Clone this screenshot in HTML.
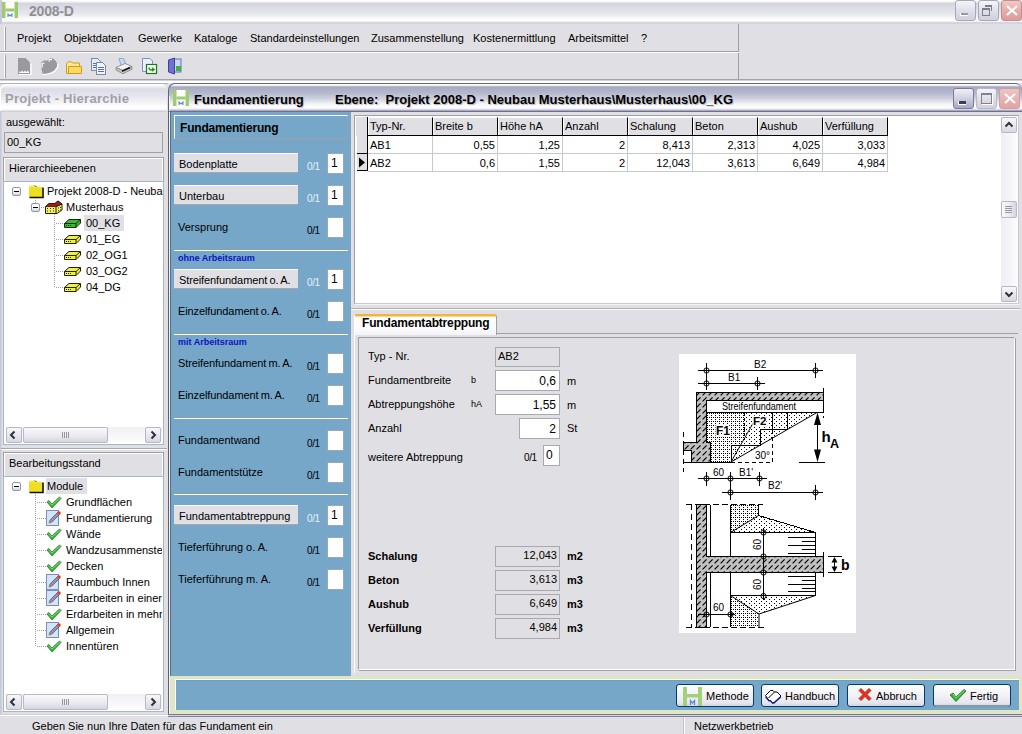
<!DOCTYPE html>
<html><head><meta charset="utf-8">
<style>
*{margin:0;padding:0;box-sizing:border-box}
html,body{width:1022px;height:734px;overflow:hidden;background:#e0dfe3;font-family:"Liberation Sans",sans-serif;font-size:11px;color:#000}
.a{position:absolute}
.t{position:absolute;white-space:nowrap;line-height:13px}
.b{font-weight:bold}
</style></head><body>
<!-- title bar -->
<div class="a" style="left:0;top:0;width:1022px;height:24px;background:linear-gradient(#ffffff 0,#ffffff 1px,#d4d4e0 3.5px,#dcdde6 8px,#e6e8ee 14px,#f8f8f8 18px,#ffffff 21px,#c8c8d8 23px,#e0dfe3 24px)"></div>
<div class="a" style="left:0;top:0;width:2px;height:24px;background:#c8c8d8"></div>
<svg class="a" style="left:2px;top:2px" width="16" height="16" viewBox="0 0 16 16"><rect x="0" y="0" width="16" height="16" fill="#fff"/><rect x="0" y="0" width="3.5" height="16" fill="#9ccb6c"/><rect x="12.5" y="0" width="3.5" height="16" fill="#9ccb6c"/><rect x="3.5" y="6.5" width="9" height="3" fill="#9ccb6c"/><path d="M6 15V12L8 14L10 12V15" stroke="#5a8ac8" stroke-width="1.1" fill="none"/></svg>
<div class="t b" style="left:29px;top:3px;font-size:14px;line-height:16px;color:#909094;letter-spacing:-0.2px">2008-D</div>
<div class="a" style="left:955px;top:0;width:21px;height:21px;border:1px solid #a8a8b8;border-radius:3px;background:linear-gradient(#f4f4f8,#e0e0ea 50%,#d0d0de)"></div>
<div class="a" style="left:960px;top:13px;width:8px;height:3px;background:#9898ac;border-bottom:1px solid #fff;border-left:1px solid #fff"></div>
<div class="a" style="left:978px;top:0;width:21px;height:21px;border:1px solid #a8a8b8;border-radius:3px;background:linear-gradient(#f4f4f8,#e0e0ea 50%,#d0d0de)"></div>
<div class="a" style="left:985px;top:5px;width:7px;height:6px;border:1px solid #7c7c8c;border-top-width:2px;border-left:none;border-bottom:none"></div>
<div class="a" style="left:982px;top:8px;width:8px;height:8px;border:1px solid #7c7c8c;border-top-width:2px;background:transparent"></div>
<div class="a" style="left:1001px;top:0;width:21px;height:21px;border:1px solid #c09090;border-radius:3px;background:linear-gradient(#f0c8c8,#e4a8a8 60%,#dc9c9c)"></div>
<svg class="a" style="left:1005px;top:4px" width="14" height="13"><path d="M2 2L12 11M12 2L2 11" stroke="#fff" stroke-width="2.2"/></svg>
<!-- menu bar -->
<div class="a" style="left:0;top:24px;width:739px;height:28px;background:#e0dfe3;border-right:1px solid #a0a0a4;border-bottom:1px solid #a0a0a4"></div>
<div class="a" style="left:0;top:52px;width:739px;height:1px;background:#fff"></div>
<div class="a" style="left:0;top:53px;width:739px;height:26px;background:#e0dfe3;border-right:1px solid #a0a0a4"></div>
<div class="a" style="left:0;top:79px;width:1022px;height:1px;background:#a4a4a8"></div><div class="a" style="left:0;top:80px;width:1022px;height:1px;background:#d0d0d4"></div><div class="a" style="left:0;top:81px;width:1022px;height:2px;background:#fff"></div>
<div class="a" style="left:4px;top:27px;width:2px;height:23px;border-left:1px solid #fff;border-right:1px solid #a0a0a4"></div>
<div class="a" style="left:4px;top:55px;width:2px;height:23px;border-left:1px solid #fff;border-right:1px solid #a0a0a4"></div>
<div class="t" style="left:17px;top:32px">Projekt</div>
<div class="t" style="left:64px;top:32px">Objektdaten</div>
<div class="t" style="left:138px;top:32px">Gewerke</div>
<div class="t" style="left:194px;top:32px">Kataloge</div>
<div class="t" style="left:250px;top:32px">Standardeinstellungen</div>
<div class="t" style="left:371px;top:32px">Zusammenstellung</div>
<div class="t" style="left:473px;top:32px">Kostenermittlung</div>
<div class="t" style="left:568px;top:32px">Arbeitsmittel</div>
<div class="t" style="left:641px;top:32px">?</div>
<!-- toolbar icons -->
<svg class="a" style="left:17px;top:57px" width="16" height="19"><path d="M14 6.5V17.5H2" stroke="#fff" stroke-width="1.2" fill="none"/><path d="M1 1H8.5L13 5.5V17H1Z" fill="#9a9a9e"/><path d="M2 16L2.8 14L3.8 15.2L5.2 13.6L6.5 15.2L8 13.6L9.3 15.2L10.8 13.6L12 15.2V16Z" fill="#fff"/></svg>
<svg class="a" style="left:40px;top:57px" width="19" height="19"><path d="M17.8 7V10L14.8 14.2L10.5 16.5L5 17.5H2.5" stroke="#fff" stroke-width="1.2" fill="none"/><path d="M1 5.5L4 3.5H7.5L9.5 1.5H13L15 3L17 6V9.5L14 13.5L10 15.8L5 16.8H2.5L1.5 12V8Z" fill="#9a9a9e"/><path d="M2.2 10.5V6.2H4.5M9.2 4.8V2.6H12" stroke="#fff" stroke-width="1.1" fill="none"/></svg>
<svg class="a" style="left:65px;top:60px" width="18" height="15"><path d="M1.5 13.5V3.5L3 1.8H6.5L7.5 3H14.5V13.5Z" fill="#fce890" stroke="#c8a020"/><path d="M3.5 13.5V6.5H16.5V13.5Z" fill="#ffd860" stroke="#c8a020"/></svg>
<svg class="a" style="left:90px;top:57px" width="18" height="18" shape-rendering="crispEdges"><path d="M1.5 1.5H7.5L10.5 4.5V13.5H1.5Z" fill="#e4ecfa" stroke="#8088a8"/><path d="M6.5 5.5H12.5L15.5 8.5V17.5H6.5Z" fill="#eef4fc" stroke="#8088a8"/><path d="M8 10.5H14M8 12.5H14M8 14.5H14M3 6.5H6M3 8.5H6M3 10.5H6" stroke="#6070a0"/></svg>
<svg class="a" style="left:115px;top:57px" width="18" height="18"><path d="M4 1.5H8.5L11 7.5L6.5 9.5Z" fill="#c4dcf4" stroke="#8aa0c0" stroke-width="0.9"/><path d="M1 10.5L10 6.5L17 9.5L8 13.5Z" fill="#f4f4f4" stroke="#8c8c8c" stroke-width="0.9"/><path d="M1 10.5V13L8 16.8L17 12.2V9.5L8 13.5Z" fill="#c4c4c4" stroke="#8c8c8c" stroke-width="0.9"/><path d="M7 14.2L15 10.6" stroke="#111" stroke-width="1.6"/></svg>
<svg class="a" style="left:141px;top:57px" width="18" height="18"><path d="M1.5 1.5H9L11.5 4V14.5H1.5Z" fill="#e8f0fc" stroke="#8090c0"/><rect x="5.5" y="7.5" width="10" height="9" fill="#fff" stroke="#187818" stroke-width="1.2"/><path d="M8 10.5C8 13 10 13.5 12.5 12.5M11 11L13 12.5L11 14" stroke="#18a018" stroke-width="1.6" fill="none"/></svg>
<svg class="a" style="left:167px;top:57px" width="16" height="18"><rect x="7" y="2" width="7" height="13" fill="#c8d8f0" stroke="#6070c0"/><rect x="9" y="9" width="5" height="5" fill="#40b040"/><path d="M1.5 3L7.5 1V17L1.5 15Z" fill="#7070d0" stroke="#4040a0"/></svg>
<!-- left panel -->
<div class="a" style="left:0;top:83px;width:168px;height:633px;background:#e0dfe3"></div>
<div class="a" style="left:0;top:90px;width:2px;height:626px;background:linear-gradient(90deg,#c0c4d4,#d8d8e0)"></div>
<div class="a" style="left:0;top:83px;width:168px;height:1px;background:#b0b0b8"></div><div class="a" style="left:0;top:84px;width:167px;height:27px;background:linear-gradient(#ffffff 0,#f4f4f8 2px,#dcdce8 5px,#e4e4ee 11px,#f2f2f6 18px,#ffffff 23px,#fafafc 26px,#c8c8d4 27px);border-radius:6px 6px 0 0;box-shadow:inset 1px 1px 0 #fff"></div>
<div class="t b" style="left:5px;top:91px;font-size:13px;line-height:15px;color:#a0a0a4;letter-spacing:0.25px">Projekt - Hierarchie</div>
<div class="a" style="left:1px;top:111px;width:166px;height:1px;background:#d0d0d8"></div>
<div class="t" style="left:6px;top:116px">ausgewählt:</div>
<div class="a" style="left:4px;top:132px;width:159px;height:21px;border:1px solid #a0a0a4"></div>
<div class="t" style="left:7px;top:136px">00_KG</div>
<div class="a" style="left:3px;top:157px;width:161px;height:24px;border:1px solid #a0a0a4;border-bottom:none;box-shadow:inset 1px 1px 0 #fff,inset -1px 0 0 #fff"></div>
<div class="t" style="left:9px;top:162px">Hierarchieebenen</div>
<div class="a" style="left:3px;top:181px;width:161px;height:264px;background:#fff;border:1px solid #a4b8cc"></div>
<div class="a" style="left:12px;top:187px;width:9px;height:9px;border:1px solid #9098a8;border-radius:2px;background:linear-gradient(#fff 40%,#d4d4e0)"></div><div class="a" style="left:14px;top:191px;width:5px;height:1px;background:#000"></div><svg class="a" style="left:28px;top:184px" width="16" height="15"><path d="M1 3.5Q1 1.5 3 1.5H7L8.5 3H14V13H1Z" fill="#f0e838"/><path d="M7 1.5L8.5 3" stroke="#303010"/><path d="M1 4H14V13H1Z" fill="#eee020"/><path d="M1.5 13.5H15V3.5" stroke="#101008" stroke-width="1.6" fill="none"/></svg><div class="t" style="left:47px;top:185px;width:116px;overflow:hidden">Projekt 2008-D - Neubau</div><div class="a" style="left:35px;top:198px;width:1px;height:5px;background:repeating-linear-gradient(#a0a0a0 0 1px,transparent 1px 2px)"></div><div class="a" style="left:31px;top:203px;width:9px;height:9px;border:1px solid #9098a8;border-radius:2px;background:linear-gradient(#fff 40%,#d4d4e0)"></div><div class="a" style="left:33px;top:207px;width:5px;height:1px;background:#000"></div><div class="a" style="left:41px;top:207px;width:4px;height:1px;background:repeating-linear-gradient(90deg,#a0a0a0 0 1px,transparent 1px 2px)"></div><svg class="a" style="left:45px;top:200px" width="18" height="14"><path d="M0.5 6.5L4 3.5H10L13 1L17 4V10L12 13.5H0.5Z" fill="#f0f060" stroke="#202010"/><path d="M4 3.5L10 3.5L13 1L17 4L11 6.5H1Z" fill="#b01818" stroke="#202010" stroke-width="0.8"/><path d="M11 6.5V13.5M11 6.5L17 4" stroke="#202010" fill="none"/><path d="M2 8.5H3M5 8.5H6M8 8.5H9M2 11H3M5 11H6M8 11H9M13 8H14M15 7.5H16M13 10.5H14M15 10H16" stroke="#303010"/></svg><div class="t" style="left:66px;top:201px">Musterhaus</div><div class="a" style="left:54px;top:214px;width:1px;height:74px;background:repeating-linear-gradient(#a0a0a0 0 1px,transparent 1px 2px)"></div><div class="a" style="left:56px;top:223px;width:8px;height:1px;background:repeating-linear-gradient(90deg,#a0a0a0 0 1px,transparent 1px 2px)"></div><svg class="a" style="left:64px;top:218px" width="17" height="10"><path d="M0.5 5.5L5 1.5H16.5V5L12 9.5H0.5Z" fill="#30c030" stroke="#202010" stroke-width="1"/><path d="M0.5 5.5H12L16.5 1.5M12 5.5V9.5" stroke="#202010" fill="none"/><path d="M2 7.5H3M4 7.5H5M6 7.5H7" stroke="#202010"/></svg><div class="a" style="left:84px;top:215px;width:40px;height:16px;background:#e0dfe3"></div><div class="t" style="left:86px;top:217px">00_KG</div><div class="a" style="left:56px;top:239px;width:8px;height:1px;background:repeating-linear-gradient(90deg,#a0a0a0 0 1px,transparent 1px 2px)"></div><svg class="a" style="left:64px;top:234px" width="17" height="10"><path d="M0.5 5.5L5 1.5H16.5V5L12 9.5H0.5Z" fill="#f0f040" stroke="#202010" stroke-width="1"/><path d="M0.5 5.5H12L16.5 1.5M12 5.5V9.5" stroke="#202010" fill="none"/><path d="M2 7.5H3M4 7.5H5M6 7.5H7" stroke="#202010"/></svg><div class="t" style="left:86px;top:233px">01_EG</div><div class="a" style="left:56px;top:255px;width:8px;height:1px;background:repeating-linear-gradient(90deg,#a0a0a0 0 1px,transparent 1px 2px)"></div><svg class="a" style="left:64px;top:250px" width="17" height="10"><path d="M0.5 5.5L5 1.5H16.5V5L12 9.5H0.5Z" fill="#f0f040" stroke="#202010" stroke-width="1"/><path d="M0.5 5.5H12L16.5 1.5M12 5.5V9.5" stroke="#202010" fill="none"/><path d="M2 7.5H3M4 7.5H5M6 7.5H7" stroke="#202010"/></svg><div class="t" style="left:86px;top:249px">02_OG1</div><div class="a" style="left:56px;top:271px;width:8px;height:1px;background:repeating-linear-gradient(90deg,#a0a0a0 0 1px,transparent 1px 2px)"></div><svg class="a" style="left:64px;top:266px" width="17" height="10"><path d="M0.5 5.5L5 1.5H16.5V5L12 9.5H0.5Z" fill="#f0f040" stroke="#202010" stroke-width="1"/><path d="M0.5 5.5H12L16.5 1.5M12 5.5V9.5" stroke="#202010" fill="none"/><path d="M2 7.5H3M4 7.5H5M6 7.5H7" stroke="#202010"/></svg><div class="t" style="left:86px;top:265px">03_OG2</div><div class="a" style="left:56px;top:287px;width:8px;height:1px;background:repeating-linear-gradient(90deg,#a0a0a0 0 1px,transparent 1px 2px)"></div><svg class="a" style="left:64px;top:282px" width="17" height="10"><path d="M0.5 5.5L5 1.5H16.5V5L12 9.5H0.5Z" fill="#f0f040" stroke="#202010" stroke-width="1"/><path d="M0.5 5.5H12L16.5 1.5M12 5.5V9.5" stroke="#202010" fill="none"/><path d="M2 7.5H3M4 7.5H5M6 7.5H7" stroke="#202010"/></svg><div class="t" style="left:86px;top:281px">04_DG</div><div class="a" style="left:6px;top:427px;width:156px;height:16px;background:linear-gradient(#f0f0f4,#fdfdfd)"></div>
<div class="a" style="left:6px;top:427px;width:16px;height:16px;border:1px solid #b4b8c8;border-radius:2px;background:linear-gradient(#f8f8fa,#d8d8e2)"></div>
<svg class="a" style="left:6px;top:427px" width="16" height="16"><path d="M8.5 4.5L5 8L8.5 11.5" stroke="#303038" stroke-width="2" fill="none"/></svg>
<div class="a" style="left:23px;top:427px;width:85px;height:16px;border:1px solid #b4b8c8;border-radius:2px;background:linear-gradient(#fafafc,#e8e8ee 60%,#d4d4de)"></div>
<div class="a" style="left:62px;top:432px;width:8px;height:6px;background:repeating-linear-gradient(90deg,#9898a4 0 1px,transparent 1px 2px)"></div>
<div class="a" style="left:145px;top:427px;width:16px;height:16px;border:1px solid #b4b8c8;border-radius:2px;background:linear-gradient(#f8f8fa,#d8d8e2)"></div>
<svg class="a" style="left:145px;top:427px" width="16" height="16"><path d="M6.5 4.5L10 8L6.5 11.5" stroke="#303038" stroke-width="2" fill="none"/></svg>
<div class="a" style="left:1px;top:448px;width:166px;height:1px;background:#a8a8b0"></div>
<div class="a" style="left:1px;top:449px;width:166px;height:1px;background:#fff"></div>
<div class="a" style="left:3px;top:452px;width:161px;height:24px;border:1px solid #a0a0a4;border-bottom:none;box-shadow:inset 1px 1px 0 #fff,inset -1px 0 0 #fff"></div>
<div class="t" style="left:9px;top:457px">Bearbeitungsstand</div>
<div class="a" style="left:3px;top:476px;width:161px;height:236px;background:#fff;border:1px solid #a4b8cc"></div>
<div class="a" style="left:12px;top:482px;width:9px;height:9px;border:1px solid #9098a8;border-radius:2px;background:linear-gradient(#fff 40%,#d4d4e0)"></div><div class="a" style="left:14px;top:486px;width:5px;height:1px;background:#000"></div><svg class="a" style="left:28px;top:479px" width="16" height="15"><path d="M1 3.5Q1 1.5 3 1.5H7L8.5 3H14V13H1Z" fill="#f0e838"/><path d="M7 1.5L8.5 3" stroke="#303010"/><path d="M1 4H14V13H1Z" fill="#eee020"/><path d="M1.5 13.5H15V3.5" stroke="#101008" stroke-width="1.6" fill="none"/></svg><div class="a" style="left:46px;top:478px;width:41px;height:16px;background:#e0dfe3"></div><div class="t" style="left:47px;top:480px">Module</div><div class="a" style="left:35px;top:493px;width:1px;height:154px;background:repeating-linear-gradient(#a0a0a0 0 1px,transparent 1px 2px)"></div><div class="a" style="left:37px;top:502px;width:9px;height:1px;background:repeating-linear-gradient(90deg,#a0a0a0 0 1px,transparent 1px 2px)"></div><svg class="a" style="left:46px;top:496px" width="16" height="13"><path d="M1 6L3 4.5L6 8L13.5 1L15 2.5L6 12Z" fill="#3cb43c" stroke="#1e7a1e" stroke-width="0.8"/><path d="M3 5.5L6 9L14 2" stroke="#90e090" stroke-width="0.8" fill="none"/></svg><div class="t" style="left:66px;top:496px;width:96px;overflow:hidden">Grundflächen</div><div class="a" style="left:37px;top:518px;width:9px;height:1px;background:repeating-linear-gradient(90deg,#a0a0a0 0 1px,transparent 1px 2px)"></div><svg class="a" style="left:46px;top:510px" width="16" height="16"><rect x="0.5" y="0.5" width="12" height="15" fill="#d4e4f8" stroke="#7890c0"/><path d="M3 13L4 10L12 2L14 4L6 12Z" fill="#9090b0" stroke="#505070" stroke-width="0.7"/><circle cx="13" cy="3" r="1.8" fill="#e04030"/><path d="M3 13L4 10L6 12Z" fill="#c09040"/></svg><div class="t" style="left:66px;top:512px;width:96px;overflow:hidden">Fundamentierung</div><div class="a" style="left:37px;top:534px;width:9px;height:1px;background:repeating-linear-gradient(90deg,#a0a0a0 0 1px,transparent 1px 2px)"></div><svg class="a" style="left:46px;top:528px" width="16" height="13"><path d="M1 6L3 4.5L6 8L13.5 1L15 2.5L6 12Z" fill="#3cb43c" stroke="#1e7a1e" stroke-width="0.8"/><path d="M3 5.5L6 9L14 2" stroke="#90e090" stroke-width="0.8" fill="none"/></svg><div class="t" style="left:66px;top:528px;width:96px;overflow:hidden">Wände</div><div class="a" style="left:37px;top:550px;width:9px;height:1px;background:repeating-linear-gradient(90deg,#a0a0a0 0 1px,transparent 1px 2px)"></div><svg class="a" style="left:46px;top:544px" width="16" height="13"><path d="M1 6L3 4.5L6 8L13.5 1L15 2.5L6 12Z" fill="#3cb43c" stroke="#1e7a1e" stroke-width="0.8"/><path d="M3 5.5L6 9L14 2" stroke="#90e090" stroke-width="0.8" fill="none"/></svg><div class="t" style="left:66px;top:544px;width:96px;overflow:hidden">Wandzusammenste</div><div class="a" style="left:37px;top:566px;width:9px;height:1px;background:repeating-linear-gradient(90deg,#a0a0a0 0 1px,transparent 1px 2px)"></div><svg class="a" style="left:46px;top:560px" width="16" height="13"><path d="M1 6L3 4.5L6 8L13.5 1L15 2.5L6 12Z" fill="#3cb43c" stroke="#1e7a1e" stroke-width="0.8"/><path d="M3 5.5L6 9L14 2" stroke="#90e090" stroke-width="0.8" fill="none"/></svg><div class="t" style="left:66px;top:560px;width:96px;overflow:hidden">Decken</div><div class="a" style="left:37px;top:582px;width:9px;height:1px;background:repeating-linear-gradient(90deg,#a0a0a0 0 1px,transparent 1px 2px)"></div><svg class="a" style="left:46px;top:574px" width="16" height="16"><rect x="0.5" y="0.5" width="12" height="15" fill="#d4e4f8" stroke="#7890c0"/><path d="M3 13L4 10L12 2L14 4L6 12Z" fill="#9090b0" stroke="#505070" stroke-width="0.7"/><circle cx="13" cy="3" r="1.8" fill="#e04030"/><path d="M3 13L4 10L6 12Z" fill="#c09040"/></svg><div class="t" style="left:66px;top:576px;width:96px;overflow:hidden">Raumbuch Innen</div><div class="a" style="left:37px;top:598px;width:9px;height:1px;background:repeating-linear-gradient(90deg,#a0a0a0 0 1px,transparent 1px 2px)"></div><svg class="a" style="left:46px;top:590px" width="16" height="16"><rect x="0.5" y="0.5" width="12" height="15" fill="#d4e4f8" stroke="#7890c0"/><path d="M3 13L4 10L12 2L14 4L6 12Z" fill="#9090b0" stroke="#505070" stroke-width="0.7"/><circle cx="13" cy="3" r="1.8" fill="#e04030"/><path d="M3 13L4 10L6 12Z" fill="#c09040"/></svg><div class="t" style="left:66px;top:592px;width:96px;overflow:hidden">Erdarbeiten in einer</div><div class="a" style="left:37px;top:614px;width:9px;height:1px;background:repeating-linear-gradient(90deg,#a0a0a0 0 1px,transparent 1px 2px)"></div><svg class="a" style="left:46px;top:608px" width="16" height="13"><path d="M1 6L3 4.5L6 8L13.5 1L15 2.5L6 12Z" fill="#3cb43c" stroke="#1e7a1e" stroke-width="0.8"/><path d="M3 5.5L6 9L14 2" stroke="#90e090" stroke-width="0.8" fill="none"/></svg><div class="t" style="left:66px;top:608px;width:96px;overflow:hidden">Erdarbeiten in mehre</div><div class="a" style="left:37px;top:630px;width:9px;height:1px;background:repeating-linear-gradient(90deg,#a0a0a0 0 1px,transparent 1px 2px)"></div><svg class="a" style="left:46px;top:622px" width="16" height="16"><rect x="0.5" y="0.5" width="12" height="15" fill="#d4e4f8" stroke="#7890c0"/><path d="M3 13L4 10L12 2L14 4L6 12Z" fill="#9090b0" stroke="#505070" stroke-width="0.7"/><circle cx="13" cy="3" r="1.8" fill="#e04030"/><path d="M3 13L4 10L6 12Z" fill="#c09040"/></svg><div class="t" style="left:66px;top:624px;width:96px;overflow:hidden">Allgemein</div><div class="a" style="left:37px;top:646px;width:9px;height:1px;background:repeating-linear-gradient(90deg,#a0a0a0 0 1px,transparent 1px 2px)"></div><svg class="a" style="left:46px;top:640px" width="16" height="13"><path d="M1 6L3 4.5L6 8L13.5 1L15 2.5L6 12Z" fill="#3cb43c" stroke="#1e7a1e" stroke-width="0.8"/><path d="M3 5.5L6 9L14 2" stroke="#90e090" stroke-width="0.8" fill="none"/></svg><div class="t" style="left:66px;top:640px;width:96px;overflow:hidden">Innentüren</div><div class="a" style="left:6px;top:694px;width:156px;height:16px;background:linear-gradient(#f0f0f4,#fdfdfd)"></div>
<div class="a" style="left:6px;top:694px;width:16px;height:16px;border:1px solid #b4b8c8;border-radius:2px;background:linear-gradient(#f8f8fa,#d8d8e2)"></div>
<svg class="a" style="left:6px;top:694px" width="16" height="16"><path d="M8.5 4.5L5 8L8.5 11.5" stroke="#303038" stroke-width="2" fill="none"/></svg>
<div class="a" style="left:23px;top:694px;width:85px;height:16px;border:1px solid #b4b8c8;border-radius:2px;background:linear-gradient(#fafafc,#e8e8ee 60%,#d4d4de)"></div>
<div class="a" style="left:62px;top:699px;width:8px;height:6px;background:repeating-linear-gradient(90deg,#9898a4 0 1px,transparent 1px 2px)"></div>
<div class="a" style="left:145px;top:694px;width:16px;height:16px;border:1px solid #b4b8c8;border-radius:2px;background:linear-gradient(#f8f8fa,#d8d8e2)"></div>
<svg class="a" style="left:145px;top:694px" width="16" height="16"><path d="M6.5 4.5L10 8L6.5 11.5" stroke="#303038" stroke-width="2" fill="none"/></svg>

<!-- main window -->
<div class="a" style="left:168px;top:83px;width:854px;height:633px;background:#e0dfe3"></div>
<div class="a" style="left:168px;top:83px;width:854px;height:28px;border-radius:7px 7px 0 0;border-top:1px solid #606878;border-left:1px solid #606878;background:linear-gradient(#ffffff 0,#ffffff 1px,#a8a8c4 3px,#b4b8cc 9px,#d0d4e0 15px,#f4f4f6 20px,#ffffff 23px,#f0f0f6 25px,#9090b0 27px)"></div>
<div class="a" style="left:168px;top:96px;width:1px;height:620px;background:#606070"></div>
<div class="a" style="left:169px;top:96px;width:1px;height:620px;background:#f4f4f8"></div>
<div class="a" style="left:170px;top:112px;width:1px;height:564px;background:#5a6e8a"></div>
<div class="a" style="left:168px;top:111px;width:854px;height:1px;background:#707090"></div>
<svg class="a" style="left:173px;top:90px" width="16" height="16" viewBox="0 0 16 16"><rect x="0" y="0" width="16" height="16" fill="#fff"/><rect x="0" y="0" width="3.5" height="16" fill="#a0cc70"/><rect x="12.5" y="0" width="3.5" height="16" fill="#a0cc70"/><rect x="3.5" y="6.5" width="9" height="3" fill="#a0cc70"/><path d="M6 15V12L8 14L10 12V15" stroke="#6088c0" stroke-width="1.1" fill="none"/></svg>
<div class="t b" style="left:194px;top:92px;font-size:13px;line-height:15px;text-shadow:1px 1px 1px #b0b0c0">Fundamentierung</div>
<div class="t b" style="left:335px;top:92px;font-size:13px;line-height:15px;text-shadow:1px 1px 1px #b0b0c0">Ebene:&nbsp; Projekt 2008-D - Neubau Musterhaus\Musterhaus\00_KG</div>
<div class="a" style="left:953px;top:88px;width:21px;height:21px;border:1px solid #7c7c98;border-radius:3px;background:linear-gradient(#f0f0f8,#d0d0e4 50%,#a8a8c8)"></div>
<div class="a" style="left:958px;top:101px;width:8px;height:4px;background:#3c3c58;border-bottom:1px solid #fff;border-left:1px solid #fff"></div>
<div class="a" style="left:976px;top:88px;width:21px;height:21px;border:1px solid #b8b8c8;border-radius:3px;background:linear-gradient(#f4f4f8,#e0e0ea 50%,#d0d0de)"></div>
<div class="a" style="left:981px;top:93px;width:11px;height:11px;border:1px solid #808090;border-top-width:2px;box-shadow:1px 1px 0 #fff"></div>
<div class="a" style="left:999px;top:88px;width:21px;height:21px;border:1px solid #d0a0a0;border-radius:3px;background:linear-gradient(#f0c4c4,#e8b0b0 60%,#e0a4a4)"></div>
<svg class="a" style="left:1003px;top:92px" width="14" height="13"><path d="M2 2L12 11M12 2L2 11" stroke="#fff" stroke-width="2.2"/></svg>

<!-- blue left panel -->
<div class="a" style="left:171px;top:112px;width:180px;height:564px;background:#76a7c8"></div>
<div class="a" style="left:174px;top:115px;width:174px;height:24px;border-top:1px solid #fff;border-left:1px solid #fff;border-right:1px solid #a0a0a8;border-bottom:1px solid #a0a0a8"></div>
<div class="t b" style="left:180px;top:121px;font-size:12px;line-height:14px;letter-spacing:-0.2px">Fundamentierung</div>
<div class="a" style="left:174px;top:153px;width:124px;height:20px;background:#e0dfe3;border-top:1px solid #fff;border-bottom:1px solid #a8a8b0"></div><div class="t" style="left:179px;top:158px">Bodenplatte</div><div class="t" style="left:307px;top:162px;font-size:10px;line-height:10px;letter-spacing:-0.4px;color:#e4f0fc">0/1</div><div class="a" style="left:327px;top:153px;width:17px;height:21px;background:#fff;border:1px solid #98a8b8"></div><div class="t" style="left:331px;top:156px;font-size:12px;line-height:14px">1</div>
<div class="a" style="left:174px;top:185px;width:124px;height:20px;background:#e0dfe3;border-top:1px solid #fff;border-bottom:1px solid #a8a8b0"></div><div class="t" style="left:179px;top:190px">Unterbau</div><div class="t" style="left:307px;top:194px;font-size:10px;line-height:10px;letter-spacing:-0.4px;color:#e4f0fc">0/1</div><div class="a" style="left:327px;top:185px;width:17px;height:21px;background:#fff;border:1px solid #98a8b8"></div><div class="t" style="left:331px;top:188px;font-size:12px;line-height:14px">1</div>
<div class="t" style="left:178px;top:221px">Versprung</div><div class="t" style="left:307px;top:226px;font-size:10px;line-height:10px;letter-spacing:-0.4px;color:#000">0/1</div><div class="a" style="left:327px;top:217px;width:17px;height:21px;background:#fff;border:1px solid #98a8b8"></div>
<div class="a" style="left:174px;top:249px;width:174px;height:1px;background:#8c9cac"></div><div class="a" style="left:174px;top:250px;width:174px;height:1px;background:#fff"></div>
<div class="t" style="left:178px;top:253px;font-size:9px;line-height:10px;font-weight:bold;color:#0814c4">ohne Arbeitsraum</div>
<div class="a" style="left:174px;top:269px;width:124px;height:20px;background:#e0dfe3;border-top:1px solid #fff;border-bottom:1px solid #a8a8b0"></div><div class="t" style="left:179px;top:274px;word-spacing:-0.6px;letter-spacing:-0.1px">Streifenfundament o. A.</div><div class="t" style="left:307px;top:278px;font-size:10px;line-height:10px;letter-spacing:-0.4px;color:#e4f0fc">0/1</div><div class="a" style="left:327px;top:269px;width:17px;height:21px;background:#fff;border:1px solid #98a8b8"></div><div class="t" style="left:331px;top:272px;font-size:12px;line-height:14px">1</div>
<div class="t" style="left:178px;top:305px;word-spacing:-0.6px;letter-spacing:-0.1px">Einzelfundament o. A.</div><div class="t" style="left:307px;top:310px;font-size:10px;line-height:10px;letter-spacing:-0.4px;color:#000">0/1</div><div class="a" style="left:327px;top:301px;width:17px;height:21px;background:#fff;border:1px solid #98a8b8"></div>
<div class="a" style="left:174px;top:333px;width:174px;height:1px;background:#8c9cac"></div><div class="a" style="left:174px;top:334px;width:174px;height:1px;background:#fff"></div>
<div class="t" style="left:178px;top:337px;font-size:9px;line-height:10px;font-weight:bold;color:#0814c4">mit Arbeitsraum</div>
<div class="t" style="left:178px;top:357px;word-spacing:-0.6px;letter-spacing:-0.1px">Streifenfundament m. A.</div><div class="t" style="left:307px;top:362px;font-size:10px;line-height:10px;letter-spacing:-0.4px;color:#000">0/1</div><div class="a" style="left:327px;top:353px;width:17px;height:21px;background:#fff;border:1px solid #98a8b8"></div>
<div class="t" style="left:178px;top:389px;word-spacing:-0.6px;letter-spacing:-0.1px">Einzelfundament m. A.</div><div class="t" style="left:307px;top:394px;font-size:10px;line-height:10px;letter-spacing:-0.4px;color:#000">0/1</div><div class="a" style="left:327px;top:385px;width:17px;height:21px;background:#fff;border:1px solid #98a8b8"></div>
<div class="a" style="left:174px;top:417px;width:174px;height:1px;background:#8c9cac"></div><div class="a" style="left:174px;top:418px;width:174px;height:1px;background:#fff"></div>
<div class="t" style="left:178px;top:434px">Fundamentwand</div><div class="t" style="left:307px;top:439px;font-size:10px;line-height:10px;letter-spacing:-0.4px;color:#000">0/1</div><div class="a" style="left:327px;top:430px;width:17px;height:21px;background:#fff;border:1px solid #98a8b8"></div>
<div class="t" style="left:178px;top:466px">Fundamentstütze</div><div class="t" style="left:307px;top:471px;font-size:10px;line-height:10px;letter-spacing:-0.4px;color:#000">0/1</div><div class="a" style="left:327px;top:462px;width:17px;height:21px;background:#fff;border:1px solid #98a8b8"></div>
<div class="a" style="left:174px;top:493px;width:174px;height:1px;background:#8c9cac"></div><div class="a" style="left:174px;top:494px;width:174px;height:1px;background:#fff"></div>
<div class="a" style="left:174px;top:505px;width:124px;height:20px;background:#e0dfe3;border-top:1px solid #fff;border-bottom:1px solid #a8a8b0"></div><div class="t" style="left:179px;top:510px">Fundamentabtreppung</div><div class="t" style="left:307px;top:514px;font-size:10px;line-height:10px;letter-spacing:-0.4px;color:#e4f0fc">0/1</div><div class="a" style="left:327px;top:505px;width:17px;height:21px;background:#fff;border:1px solid #98a8b8"></div><div class="t" style="left:331px;top:508px;font-size:12px;line-height:14px">1</div>
<div class="t" style="left:178px;top:541px">Tieferführung o. A.</div><div class="t" style="left:307px;top:546px;font-size:10px;line-height:10px;letter-spacing:-0.4px;color:#000">0/1</div><div class="a" style="left:327px;top:537px;width:17px;height:21px;background:#fff;border:1px solid #98a8b8"></div>
<div class="t" style="left:178px;top:573px">Tieferführung m. A.</div><div class="t" style="left:307px;top:578px;font-size:10px;line-height:10px;letter-spacing:-0.4px;color:#000">0/1</div><div class="a" style="left:327px;top:569px;width:17px;height:21px;background:#fff;border:1px solid #98a8b8"></div>

<!-- grid -->
<div class="a" style="left:351px;top:112px;width:669px;height:564px;background:#e0dfe3"></div>
<div class="a" style="left:354px;top:115px;width:665px;height:189px;background:#fff;border:1px solid #a0a0a8;border-right-color:#c8c8d0;border-bottom-color:#c8c8d0"></div>
<div class="a" style="left:355px;top:304px;width:665px;height:1px;background:#f4f4f4"></div>
<div class="a" style="left:351px;top:308px;width:669px;height:1px;background:#b0b0b4"></div>
<div class="a" style="left:351px;top:309px;width:669px;height:1px;background:#fafafa"></div>
<div class="a" style="left:356px;top:117px;width:532px;height:19px;background:#e0dfe3"></div>
<div class="a" style="left:356px;top:135px;width:532px;height:1px;background:#000"></div>
<div class="a" style="left:356px;top:117px;width:12px;height:54px;background:#e0dfe3"></div>
<div class="a" style="left:367px;top:117px;width:1px;height:54px;background:#000"></div>
<div class="a" style="left:356px;top:153px;width:12px;height:1px;background:#000"></div>
<div class="a" style="left:356px;top:170px;width:12px;height:1px;background:#000"></div>
<div class="a" style="left:356px;top:136px;width:1px;height:35px;background:#fff"></div>
<svg class="a" style="left:358px;top:157px" width="8" height="11"><path d="M1 0.5L7 5.5L1 10.5Z" fill="#000"/></svg>
<div class="a" style="left:368px;top:117px;width:65px;height:18px;border-left:1px solid #fff;border-top:1px solid #fff;border-right:1px solid #000"></div><div class="t" style="left:370px;top:120px">Typ-Nr.</div>
<div class="a" style="left:368px;top:136px;width:65px;height:18px;border-right:1px solid #c8c8c8;border-bottom:1px solid #c8c8c8"></div><div class="t" style="left:370px;top:139px">AB1</div><div class="a" style="left:368px;top:154px;width:65px;height:18px;border-right:1px solid #c8c8c8;border-bottom:1px solid #c8c8c8"></div><div class="t" style="left:370px;top:157px">AB2</div>
<div class="a" style="left:433px;top:117px;width:65px;height:18px;border-left:1px solid #fff;border-top:1px solid #fff;border-right:1px solid #000"></div><div class="t" style="left:435px;top:120px">Breite b</div>
<div class="a" style="left:433px;top:136px;width:65px;height:18px;border-right:1px solid #c8c8c8;border-bottom:1px solid #c8c8c8"></div><div class="t" style="left:433px;top:139px;width:62px;text-align:right">0,55</div><div class="a" style="left:433px;top:154px;width:65px;height:18px;border-right:1px solid #c8c8c8;border-bottom:1px solid #c8c8c8"></div><div class="t" style="left:433px;top:157px;width:62px;text-align:right">0,6</div>
<div class="a" style="left:498px;top:117px;width:65px;height:18px;border-left:1px solid #fff;border-top:1px solid #fff;border-right:1px solid #000"></div><div class="t" style="left:500px;top:120px">Höhe hA</div>
<div class="a" style="left:498px;top:136px;width:65px;height:18px;border-right:1px solid #c8c8c8;border-bottom:1px solid #c8c8c8"></div><div class="t" style="left:498px;top:139px;width:62px;text-align:right">1,25</div><div class="a" style="left:498px;top:154px;width:65px;height:18px;border-right:1px solid #c8c8c8;border-bottom:1px solid #c8c8c8"></div><div class="t" style="left:498px;top:157px;width:62px;text-align:right">1,55</div>
<div class="a" style="left:563px;top:117px;width:65px;height:18px;border-left:1px solid #fff;border-top:1px solid #fff;border-right:1px solid #000"></div><div class="t" style="left:565px;top:120px">Anzahl</div>
<div class="a" style="left:563px;top:136px;width:65px;height:18px;border-right:1px solid #c8c8c8;border-bottom:1px solid #c8c8c8"></div><div class="t" style="left:563px;top:139px;width:62px;text-align:right">2</div><div class="a" style="left:563px;top:154px;width:65px;height:18px;border-right:1px solid #c8c8c8;border-bottom:1px solid #c8c8c8"></div><div class="t" style="left:563px;top:157px;width:62px;text-align:right">2</div>
<div class="a" style="left:628px;top:117px;width:65px;height:18px;border-left:1px solid #fff;border-top:1px solid #fff;border-right:1px solid #000"></div><div class="t" style="left:630px;top:120px">Schalung</div>
<div class="a" style="left:628px;top:136px;width:65px;height:18px;border-right:1px solid #c8c8c8;border-bottom:1px solid #c8c8c8"></div><div class="t" style="left:628px;top:139px;width:62px;text-align:right">8,413</div><div class="a" style="left:628px;top:154px;width:65px;height:18px;border-right:1px solid #c8c8c8;border-bottom:1px solid #c8c8c8"></div><div class="t" style="left:628px;top:157px;width:62px;text-align:right">12,043</div>
<div class="a" style="left:693px;top:117px;width:65px;height:18px;border-left:1px solid #fff;border-top:1px solid #fff;border-right:1px solid #000"></div><div class="t" style="left:695px;top:120px">Beton</div>
<div class="a" style="left:693px;top:136px;width:65px;height:18px;border-right:1px solid #c8c8c8;border-bottom:1px solid #c8c8c8"></div><div class="t" style="left:693px;top:139px;width:62px;text-align:right">2,313</div><div class="a" style="left:693px;top:154px;width:65px;height:18px;border-right:1px solid #c8c8c8;border-bottom:1px solid #c8c8c8"></div><div class="t" style="left:693px;top:157px;width:62px;text-align:right">3,613</div>
<div class="a" style="left:758px;top:117px;width:65px;height:18px;border-left:1px solid #fff;border-top:1px solid #fff;border-right:1px solid #000"></div><div class="t" style="left:760px;top:120px">Aushub</div>
<div class="a" style="left:758px;top:136px;width:65px;height:18px;border-right:1px solid #c8c8c8;border-bottom:1px solid #c8c8c8"></div><div class="t" style="left:758px;top:139px;width:62px;text-align:right">4,025</div><div class="a" style="left:758px;top:154px;width:65px;height:18px;border-right:1px solid #c8c8c8;border-bottom:1px solid #c8c8c8"></div><div class="t" style="left:758px;top:157px;width:62px;text-align:right">6,649</div>
<div class="a" style="left:823px;top:117px;width:65px;height:18px;border-left:1px solid #fff;border-top:1px solid #fff;border-right:1px solid #000"></div><div class="t" style="left:825px;top:120px">Verfüllung</div>
<div class="a" style="left:823px;top:136px;width:65px;height:18px;border-right:1px solid #c8c8c8;border-bottom:1px solid #c8c8c8"></div><div class="t" style="left:823px;top:139px;width:62px;text-align:right">3,033</div><div class="a" style="left:823px;top:154px;width:65px;height:18px;border-right:1px solid #c8c8c8;border-bottom:1px solid #c8c8c8"></div><div class="t" style="left:823px;top:157px;width:62px;text-align:right">4,984</div>
<div class="a" style="left:1001px;top:117px;width:16px;height:185px;background:linear-gradient(90deg,#eeeef4,#fbfbfd)"></div>
<div class="a" style="left:1001px;top:117px;width:16px;height:16px;border:1px solid #b4b8c8;border-radius:2px;background:linear-gradient(#f8f8fa,#d8d8e2)"></div>
<svg class="a" style="left:1001px;top:117px" width="16" height="16"><path d="M4.5 9.5L8 6L11.5 9.5" stroke="#303038" stroke-width="2" fill="none"/></svg>
<div class="a" style="left:1001px;top:201px;width:16px;height:17px;border:1px solid #b4b8c8;border-radius:2px;background:linear-gradient(90deg,#fafafc,#e8e8ee 60%,#d4d4de)"></div>
<div class="a" style="left:1005px;top:206px;width:7px;height:7px;background:repeating-linear-gradient(#9898a4 0 1px,transparent 1px 2px)"></div>
<div class="a" style="left:1001px;top:286px;width:16px;height:16px;border:1px solid #b4b8c8;border-radius:2px;background:linear-gradient(#f8f8fa,#d8d8e2)"></div>
<svg class="a" style="left:1001px;top:286px" width="16" height="16"><path d="M4.5 6.5L8 10L11.5 6.5" stroke="#303038" stroke-width="2" fill="none"/></svg>

<!-- tab -->
<div class="a" style="left:354px;top:333px;width:664px;height:340px;border-top:1px solid #a0a0a8;border-left:1px solid #fff"></div>
<div class="a" style="left:354px;top:314px;width:143px;height:21px;border-radius:3px 3px 0 0;background:linear-gradient(#ffffff,#fcfcfe 60%,#f4f4f8);border-left:1px solid #fff;border-right:1px solid #a0a0a8;border-top:2px solid #f2b43a;box-shadow:inset 0 1px 0 #f8d890"></div>
<div class="t b" style="left:362px;top:316px;font-size:12px;line-height:14px;letter-spacing:-0.17px">Fundamentabtreppung</div>
<div class="a" style="left:358px;top:337px;width:657px;height:333px;border-top:1px solid #a0a0a4;border-left:1px solid #a0a0a4;border-right:1px solid #fff;border-bottom:1px solid #fff;box-shadow:1px 1px 0 #a0a0a4"></div>
<div class="t" style="left:368px;top:350px;">Typ - Nr.</div>
<div class="a" style="left:495px;top:347px;width:65px;height:20px;border:1px solid #a8a8b0;background:#e0dfe3"></div><div class="t" style="left:498px;top:350px;">AB2</div>
<div class="t" style="left:368px;top:374px;">Fundamentbreite</div>
<div class="t" style="left:471px;top:375px;font-size:9px;line-height:10px">b</div>
<div class="a" style="left:495px;top:370px;width:65px;height:21px;border:1px solid #a8a8b0;background:#fff"></div><div class="t" style="left:495px;top:374px;width:61px;text-align:right;font-size:12px;line-height:14px">0,6</div>
<div class="t" style="left:567px;top:375px;">m</div>
<div class="t" style="left:368px;top:398px;">Abtreppungshöhe</div>
<div class="t" style="left:471px;top:399px;font-size:9px;line-height:10px">hA</div>
<div class="a" style="left:495px;top:394px;width:65px;height:21px;border:1px solid #a8a8b0;background:#fff"></div><div class="t" style="left:495px;top:398px;width:61px;text-align:right;font-size:12px;line-height:14px">1,55</div>
<div class="t" style="left:567px;top:399px;">m</div>
<div class="t" style="left:368px;top:422px;">Anzahl</div>
<div class="a" style="left:519px;top:418px;width:41px;height:21px;border:1px solid #a8a8b0;background:#fff"></div><div class="t" style="left:519px;top:422px;width:37px;text-align:right;font-size:12px;line-height:14px">2</div>
<div class="t" style="left:567px;top:422px;">St</div>
<div class="t" style="left:368px;top:451px;">weitere Abtreppung</div>
<div class="t" style="left:524px;top:453px;font-size:10px;line-height:10px;letter-spacing:-0.4px">0/1</div>
<div class="a" style="left:543px;top:445px;width:17px;height:21px;border:1px solid #a8a8b0;background:#fff"></div><div class="t" style="left:546px;top:448px;font-size:12px;line-height:14px">0</div>
<div class="t" style="left:368px;top:550px;font-weight:bold">Schalung</div>
<div class="a" style="left:495px;top:546px;width:65px;height:21px;border:1px solid #a8a8b0;background:#e0dfe3"></div><div class="t" style="left:495px;top:549px;width:62px;text-align:right">12,043</div>
<div class="t" style="left:567px;top:550px;font-weight:bold">m2</div>
<div class="t" style="left:368px;top:574px;font-weight:bold">Beton</div>
<div class="a" style="left:495px;top:570px;width:65px;height:21px;border:1px solid #a8a8b0;background:#e0dfe3"></div><div class="t" style="left:495px;top:573px;width:62px;text-align:right">3,613</div>
<div class="t" style="left:567px;top:574px;font-weight:bold">m3</div>
<div class="t" style="left:368px;top:598px;font-weight:bold">Aushub</div>
<div class="a" style="left:495px;top:594px;width:65px;height:21px;border:1px solid #a8a8b0;background:#e0dfe3"></div><div class="t" style="left:495px;top:597px;width:62px;text-align:right">6,649</div>
<div class="t" style="left:567px;top:598px;font-weight:bold">m3</div>
<div class="t" style="left:368px;top:622px;font-weight:bold">Verfüllung</div>
<div class="a" style="left:495px;top:618px;width:65px;height:21px;border:1px solid #a8a8b0;background:#e0dfe3"></div><div class="t" style="left:495px;top:621px;width:62px;text-align:right">4,984</div>
<div class="t" style="left:567px;top:622px;font-weight:bold">m3</div>

<!-- diagram -->
<svg class="a" style="left:679px;top:354px" width="177" height="279" viewBox="679 354 177 279" shape-rendering="crispEdges">
<defs>
<pattern id="hat" width="6" height="6" patternUnits="userSpaceOnUse"><rect width="6" height="6" fill="#c0c0c0"/><path d="M0.6 5.4L4.6 1.4" stroke="#000" stroke-width="1.1" shape-rendering="auto"/></pattern>
<pattern id="dd" width="4" height="4" patternUnits="userSpaceOnUse"><rect width="4" height="4" fill="#fff"/><rect x="1" y="1" width="1" height="1" fill="#000"/><rect x="3" y="3" width="1" height="1" fill="#000"/><rect x="3" y="1" width="1" height="1" fill="#000"/></pattern>
<pattern id="dl" width="5" height="4" patternUnits="userSpaceOnUse"><rect width="5" height="4" fill="#fff"/><rect x="1" y="1" width="1" height="1" fill="#000"/><rect x="3.5" y="3" width="1" height="1" fill="#000"/></pattern>
<g id="ck"><circle r="2.6" fill="none" stroke="#000" stroke-width="1" shape-rendering="auto"/></g>
</defs>
<rect x="679" y="354" width="177" height="279" fill="#fff"/>
<g stroke="#000" stroke-width="1" fill="none">
<!-- dims top -->
<path d="M698 370.5H823M706.5 363V378M815.5 363V378"/>
<path d="M698 383.5H765M706.5 377V390M757.5 377V390"/>
<use href="#ck" x="706.5" y="370.5"/><use href="#ck" x="815.5" y="370.5"/><use href="#ck" x="706.5" y="383.5"/><use href="#ck" x="757.5" y="383.5"/>
</g>
<!-- dotted regions -->
<path d="M706.5 412.5H817L731 462H710V442H706.5Z" fill="url(#dl)"/>
<path d="M706.5 412.5H744V440L731 462H710V442H706.5Z" fill="url(#dd)"/>
<!-- hatched slab/wall -->
<path d="M696.5 392H823V400.5H706.5V442H710V462H691.5V450.5H683.5V442.5H696.5Z" fill="url(#hat)" stroke="#000" stroke-width="1"/>
<rect x="706.5" y="400.5" width="116.5" height="12" fill="#fff" stroke="#000"/>
<g stroke="#000" stroke-width="1" fill="none">
<path d="M823 388V418" stroke-dasharray="4 3"/>
<path d="M731 462V445H760V429.5H787.5V412.5M772.5 412.5V429.5"/>
<path d="M817 412.5L731 462" shape-rendering="auto"/>
<path d="M744 413V440" stroke-dasharray="3 2"/>
<path d="M731 462L756 418" stroke-width="0.9" shape-rendering="auto"/>
<path d="M772.5 429.5V462H731" stroke-dasharray="4 3"/>
<path d="M683.5 432V472" stroke-dasharray="5 4"/>
<path d="M683.5 462H731"/>
<path d="M817.5 424V450M799 462.5H825"/>
<path d="M698 478.5H767M706.5 472V486M730.5 472V500M759.5 472V486"/>
<path d="M722 492.5H823M815.5 485V500"/>
<use href="#ck" x="706.5" y="478.5"/><use href="#ck" x="730.5" y="478.5"/><use href="#ck" x="759.5" y="478.5"/><use href="#ck" x="730.5" y="492.5"/><use href="#ck" x="815.5" y="492.5"/>
</g>
<path d="M817.5 412.5L814 425H821Z M817.5 462L814 449.5H821Z" fill="#000" shape-rendering="auto"/>
<g font-family="Liberation Sans" font-size="10" fill="#000">
<text x="754" y="368">B2</text>
<text x="728" y="381">B1</text>
<text x="722" y="410" font-size="10" textLength="74" lengthAdjust="spacingAndGlyphs">Streifenfundament</text>
<text x="716" y="435" font-weight="bold" font-size="12" stroke="#fff" stroke-width="2.5" paint-order="stroke">F1</text>
<text x="753" y="425" font-weight="bold" font-size="11.5" stroke="#fff" stroke-width="2.5" paint-order="stroke">F2</text>
<text x="755" y="459">30°</text>
<text x="713" y="476">60</text>
<text x="739" y="476">B1'</text>
<text x="768" y="489">B2'</text>
<text x="821.5" y="442" font-weight="bold" font-size="15">h</text>
<text x="830" y="447.5" font-weight="bold" font-size="12.5">A</text>
</g>
<!-- plan view -->
<path d="M730.5 504.5H758.5V515.5L730.5 532.5Z" fill="url(#dd)"/>
<path d="M758.5 515.5L815.5 532.5H730.5Z" fill="url(#dl)"/>
<path d="M730.5 595.5H815.5L759 614Z" fill="url(#dl)"/>
<path d="M730.5 595.5L759 614V627H730.5Z" fill="url(#dd)"/>
<path d="M696.5 504.5H706.5V556.5H823V572.5H706.5V627H696.5Z" fill="url(#hat)" stroke="#000"/>
<g stroke="#000" stroke-width="1" fill="none">
<path d="M686 504.5H763M686 627.5H765" stroke-dasharray="6 3"/>
<path d="M691.5 504V627" stroke-dasharray="6 4"/>
<path d="M710.5 504.5V556.5M730.5 504.5V556.5M710.5 572.5V627M730.5 572.5V627"/>
<path d="M758.5 504.5V515.5L815.5 532.5V556.5M730.5 532.5H815.5"/>
<path d="M758.5 515.5L730.5 532.5M730.5 595.5L759 614V627" shape-rendering="auto"/>
<path d="M815.5 572.5V595.5H730.5M815.5 595.5L759 614" shape-rendering="auto"/>
<path d="M788 537.5H815.5M802 541.5H815.5M788 545.5H815.5M802 549.5H815.5M788 553.5H815.5"/>
<path d="M788 576.5H815.5M802 580.5H815.5M788 584.5H815.5M802 588.5H815.5M788 591.5H815.5"/>
<path d="M823 552V577"/>
<path d="M763.5 528V600"/>
<use href="#ck" x="763.5" y="532.5"/><use href="#ck" x="763.5" y="556.5"/><use href="#ck" x="763.5" y="572.5"/><use href="#ck" x="763.5" y="596"/>
<path d="M698 614.5H735M706.5 609V620"/>
<use href="#ck" x="706.5" y="614.5"/><use href="#ck" x="730.5" y="614.5"/>
<path d="M828 556.5H842M828 572.5H842M834.5 559V570"/>
</g>
<path d="M834.5 557L831.5 562.5H837.5Z M834.5 572L831.5 566.5H837.5Z" fill="#000" shape-rendering="auto"/>
<g font-family="Liberation Sans" font-size="10" fill="#000">
<text x="0" y="0" transform="translate(761 550) rotate(-90)">60</text>
<text x="0" y="0" transform="translate(761 590) rotate(-90)">60</text>
<text x="713" y="611">60</text>
<text x="841" y="570" font-weight="bold" font-size="14">b</text>
</g>
</svg>
<!-- bottom bar -->
<div class="a" style="left:171px;top:676px;width:851px;height:38px;background:#dee6c6"></div>
<div class="a" style="left:175px;top:679px;width:844px;height:31px;background:#76a7c8;border-top:1px solid #fcffee;border-left:1px solid #fcffee;box-shadow:inset 0 1px 0 #6aa0c4"></div>
<div class="a" style="left:168px;top:714px;width:854px;height:1px;background:#787890"></div><div class="a" style="left:168px;top:715px;width:854px;height:1px;background:#d4d4dc"></div><div class="a" style="left:168px;top:716px;width:854px;height:1px;background:#8080a0"></div>
<div class="a" style="left:676px;top:684px;width:78px;height:23px;border:1px solid #003c74;border-radius:3px;background:linear-gradient(#ffffff,#f4f4f8 40%,#e6e6ee 85%,#d4d4e0)"></div>
<svg class="a" style="left:683px;top:687px" width="19" height="19" viewBox="0 0 19 19"><rect x="0" y="0" width="4" height="19" fill="#a4d07c"/><rect x="15" y="0" width="4" height="19" fill="#a4d07c"/><rect x="4" y="7" width="11" height="3.5" fill="#a4d07c"/><path d="M7.5 18V13.5L9.5 16L11.5 13.5V18" stroke="#5c8cd0" stroke-width="1.3" fill="none"/></svg><div class="t" style="left:706px;top:690px">Methode</div>
<div class="a" style="left:761px;top:684px;width:78px;height:23px;border:1px solid #003c74;border-radius:3px;background:linear-gradient(#ffffff,#f4f4f8 40%,#e6e6ee 85%,#d4d4e0)"></div>
<svg class="a" style="left:764px;top:688px" width="18" height="16" viewBox="0 0 18 16"><path d="M1.5 7.5L6.5 2.5H9L10.5 4H13L17 8L10 14.5H8.5L6.5 12.5H5Z" fill="#fff" stroke="#000" stroke-width="1"/><path d="M10.5 4L4.5 10" stroke="#000" stroke-width="1"/><path d="M1.5 8.8L5 12.8H6.5L8.5 15.2H10L17 8.8" stroke="#1818a0" stroke-width="1.2" fill="none"/></svg><div class="t" style="left:785px;top:690px">Handbuch</div>
<div class="a" style="left:847px;top:684px;width:78px;height:23px;border:1px solid #003c74;border-radius:3px;background:linear-gradient(#ffffff,#f4f4f8 40%,#e6e6ee 85%,#d4d4e0)"></div>
<svg class="a" style="left:857px;top:687px" width="16" height="16" viewBox="0 0 16 16"><path d="M2 3.5L4 1.5L8 5.5L12 1.5L14 3.5L10 7.5L14 11.5L12 13.5L8 9.5L4 13.5L2 11.5L6 7.5Z" fill="#e83020" stroke="#b01808" stroke-width="0.8"/></svg><div class="t" style="left:876px;top:690px">Abbruch</div>
<div class="a" style="left:933px;top:684px;width:78px;height:23px;border:1px solid #003c74;border-radius:3px;background:linear-gradient(#ffffff,#f4f4f8 40%,#e6e6ee 85%,#d4d4e0)"></div>
<svg class="a" style="left:949px;top:688px" width="18" height="15" viewBox="0 0 18 15"><path d="M1 7L4 5L7 9L15 1.5L17 3L7 13.5Z" fill="#38b038" stroke="#1a701a" stroke-width="0.8"/><path d="M4 6L7 10L15.5 2.5" stroke="#98e098" stroke-width="0.8" fill="none"/></svg><div class="t" style="left:970px;top:690px">Fertig</div>
<div class="a" style="left:934px;top:705px;width:76px;height:2px;background:#8898a8;border-radius:0 0 3px 3px"></div>

<!-- status bar -->
<div class="a" style="left:0;top:717px;width:1022px;height:17px;background:#e0dfe3"></div><div class="a" style="left:0;top:714px;width:168px;height:3px;background:#e0dfe3"></div>
<div class="a" style="left:0;top:714px;width:168px;height:1px;background:#d0d0d8"></div><div class="a" style="left:0;top:715px;width:168px;height:1px;background:#fafafa"></div>
<div class="a" style="left:683px;top:717px;width:1px;height:17px;background:#c4c4c8"></div>
<div class="a" style="left:684px;top:717px;width:1px;height:17px;background:#fff"></div>
<div class="t" style="left:32px;top:720px">Geben Sie nun Ihre Daten für das Fundament ein</div>
<div class="t" style="left:694px;top:720px">Netzwerkbetrieb</div>
</body></html>
